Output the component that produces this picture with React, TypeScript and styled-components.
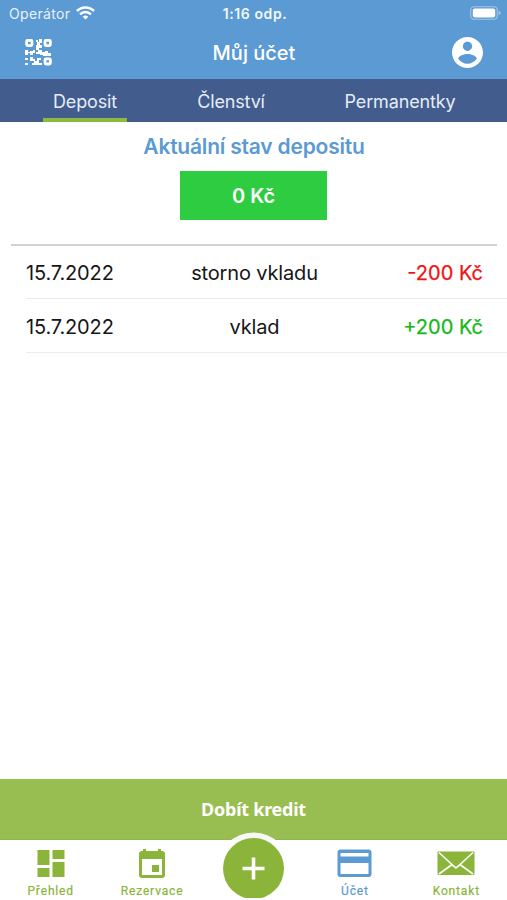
import React from "react";
import styled, { createGlobalStyle } from "styled-components";

const GlobalStyle = createGlobalStyle`
  * { box-sizing: border-box; }
  body { margin: 0; background: #fff; }
`;

const Screen = styled.div`
  width: 507px;
  height: 900px;
  display: flex;
  flex-direction: column;
  overflow: hidden;
  background: #fff;
  color: #161616;
  font-family: Inter, "Liberation Sans", sans-serif;
`;

const Header = styled.header`
  height: 79px;
  flex: none;
  background: #5b9ad2;
  color: #fff;
`;

const StatusBar = styled.div`
  display: grid;
  grid-template-columns: 1fr auto 1fr;
  align-items: center;
  height: 27px;
  padding: 0 6px 0 9px;
  font-size: 14px;
`;

const Carrier = styled.div`
  display: flex;
  align-items: center;
  gap: 6px;
  letter-spacing: 0.35px;
  color: #e9f2fa;
  svg { position: relative; top: -1px; }
`;

const Clock = styled.div`
  font-weight: 600;
  letter-spacing: 0.6px;
  color: #f1f7fc;
`;

const BatterySlot = styled.div`
  display: flex;
  justify-content: flex-end;
  padding-bottom: 2px;
`;

const TitleBar = styled.div`
  display: grid;
  grid-template-columns: 1fr auto 1fr;
  align-items: center;
  height: 50px;
  padding: 0 24px 0 25px;
  svg { display: block; }
  svg:last-child { justify-self: end; }
`;

const Title = styled.h1`
  margin: 0;
  padding-top: 1px;
  font-size: 20px;
  font-weight: 500;
`;

const Tabs = styled.nav`
  display: flex;
  flex: none;
  height: 43px;
  padding-left: 43px;
  background: #425c8d;
`;

const Tab = styled.div<{ $active?: boolean; $width: number; $gap?: number }>`
  width: ${(p) => p.$width}px;
  margin-left: ${(p) => p.$gap ?? 0}px;
  height: 43px;
  line-height: 45px;
  text-align: center;
  white-space: nowrap;
  font-size: 18px;
  letter-spacing: -0.15px;
  color: #e6edf8;
  border-bottom: 4px solid ${(p) => (p.$active ? "#8bba3e" : "transparent")};
`;

const Balance = styled.section`
  display: flex;
  flex-direction: column;
  align-items: center;
  flex: none;
  height: 124px;
  margin: 0 10px 0 11px;
  border-bottom: 2px solid #d3d3d3;
`;

const BalanceTitle = styled.h2`
  margin: 11px 0 10px;
  font-size: 21px;
  line-height: 28px;
  font-weight: 600;
  letter-spacing: -0.2px;
  color: #5b9ad2;
  white-space: nowrap;
`;

const Amount = styled.div`
  width: 147px;
  height: 49px;
  margin-right: 1px;
  line-height: 50px;
  text-align: center;
  font-size: 20px;
  font-weight: 600;
  background: #2ecc40;
  color: #fff;
`;

const Row = styled.div`
  display: grid;
  grid-template-columns: 1fr auto 1fr;
  align-items: center;
  flex: none;
  height: 54px;
  margin-left: 26px;
  padding: 2px 24px 0 0;
  border-bottom: 1px solid #ebebeb;
  font-size: 20px;
  letter-spacing: -0.15px;
  &:first-child { height: 53px; }
`;

const Value = styled.span<{ $negative?: boolean }>`
  text-align: right;
  letter-spacing: 0;
  -webkit-text-stroke: 0.25px currentColor;
  color: ${(p) => (p.$negative ? "#f01414" : "#16b81b")};
`;

const List = styled.main`
  flex: 1;
`;

const TopUp = styled.button`
  flex: none;
  height: 61px;
  padding: 0;
  border: 0;
  border-bottom: 1px solid #8fb54b;
  background: #98bd50;
  color: #fff;
  font: 700 18px/59px "Noto Sans", sans-serif;
  letter-spacing: -0.25px;
`;

const BottomNav = styled.nav`
  position: relative;
  display: grid;
  grid-template-columns: repeat(5, 1fr);
  flex: none;
  height: 60px;
  padding-bottom: 2px;
`;

const NavItem = styled.div<{ $active?: boolean }>`
  display: flex;
  flex-direction: column;
  align-items: center;
  padding-top: 7px;
  font-size: 12px;
  font-weight: 400;
  line-height: 16px;
  letter-spacing: 0.85px;
  font-family: Roboto, sans-serif;
  -webkit-text-stroke: 0.2px currentColor;
  color: ${(p) => (p.$active ? "#5b9ad2" : "#8ab53a")};
  svg { display: block; margin-bottom: 4px; }
`;

const AddSlot = styled.div`
  position: absolute;
  left: 216px;
  top: -8px;
  width: 75px;
  height: 66px;
  overflow: hidden;
`;

const QrIcon = () => (
  <svg width="27" height="27" viewBox="0 0 27 27" fill="#fff">
    <g fill="none" stroke="#fff" strokeWidth="2.8">
      <rect x="1.6" y="1.4" width="5.4" height="5.2" rx="1" />
      <rect x="20" y="1.4" width="5.4" height="5.2" rx="1" />
      <rect x="20" y="19.8" width="5.4" height="5.2" rx="1" />
    </g>
    <path d="M11 1h2v2h-2zM14 0h3v4h-2v2h2v3h-3v2h-3V6h1V3h2zM0 11h3v2h2v-1h3v-1h2v3H8v2H5v-2H3v2H0zM13 11h4v2h3v-1h3v2h3v3h-8v-1h-3v-1h-4v-2h2zM0 19h3v2H0zM5 18h3v2h2v2h2v-3h4v2h-2v3h3v2H7v-2h2v-2H5zM0 24h3v2H0z" />
  </svg>
);

const WifiIcon = () => (
  <svg width="19" height="14" viewBox="0 0 19 14" fill="none" stroke="#fff" strokeWidth="2.5">
    <path d="M1 5a12 12 0 0 1 17 0" />
    <path d="M4.1 8.3a7.5 7.5 0 0 1 10.8 0" />
    <path d="M9.5 13.6 6.7 10.8a4 4 0 0 1 5.6 0z" fill="#fff" stroke="none" />
  </svg>
);

const BatteryIcon = () => (
  <svg width="31" height="14" viewBox="0 0 31 14">
    <rect x=".7" y=".7" width="26.6" height="12.6" rx="3.5" fill="none" stroke="#a4c7e6" strokeWidth="1.1" />
    <rect x="2.8" y="2.5" width="22.4" height="9" rx="2" fill="#fff" />
    <path d="M28.7 4.8q2 .6 2 2.2t-2 2.2z" fill="#a4c7e6" />
  </svg>
);

const AccountIcon = () => (
  <svg width="31" height="31" viewBox="2 2 20 20" fill="#fff">
    <path d="M12 2C6.48 2 2 6.48 2 12s4.48 10 10 10 10-4.48 10-10S17.52 2 12 2zm0 3c1.66 0 3 1.34 3 3s-1.34 3-3 3-3-1.34-3-3 1.34-3 3-3zm0 14.2c-2.5 0-4.71-1.28-6-3.22.03-1.99 4-3.08 6-3.08 1.99 0 5.97 1.09 6 3.08-1.29 1.94-3.5 3.22-6 3.22z" />
  </svg>
);

const DashboardIcon = () => (
  <svg width="28" height="32" viewBox="0 0 28 32" fill="#8ab53a">
    <path d="M.5 3h12v15H.5zM15.500 3h12v9h-12zM.5 21h12v9H.5zM15.500 15h12v15h-12z" />
  </svg>
);

const CalendarIcon = () => (
  <svg width="26" height="32" viewBox="0 0 26 32" fill="#8ab53a">
    <path fillRule="evenodd" d="M4 2h3v2h12V2h3v2h1q3 0 3 3v21q0 3-3 3H3q-3 0-3-3V7q0-3 3-3h1zM3 12v16h20V12zM13 18h7v7h-7z" />
  </svg>
);

const CardIcon = () => (
  <svg width="35" height="32" viewBox="0 0 35 32" fill="#5b9ad2">
    <path fillRule="evenodd" d="M3.500 2.500h28q3 0 3 3V27q0 3-3 3h-28q-3 0-3-3V5.500q0-3 3-3zM3.500 6v3.500h28V6zM3.500 16v11h28V16z" />
  </svg>
);

const MailIcon = () => (
  <svg width="38" height="32" viewBox="0 0 38 32">
    <rect x=".5" y="4.500" width="37" height="23.500" rx="1" fill="#8ab53a" />
    <path d="M2 5.500 16.500 19l2.500 2 2.500-2L36 5.500M2 27 15 17.500l4 3.500 4-3.500L36 27" fill="none" stroke="#fff" strokeWidth="1.600" />
  </svg>
);

const AddIcon = () => (
  <svg width="75" height="75" viewBox="0 0 75 75">
    <circle cx="37.500" cy="37" r="36.500" fill="#f7f8f5" />
    <path d="M0 8h75v67H0z" fill="#fff" />
    <circle cx="37.500" cy="36.500" r="30.500" fill="#8ab53a" />
    <path d="M37.500 25.500v22M26.500 36.500h22" stroke="#fff" strokeWidth="3.600" />
  </svg>
);

const transactions = [
  { date: "15.7.2022", label: "storno vkladu", value: "-200 Kč" },
  { date: "15.7.2022", label: "vklad", value: "+200 Kč" },
];

export default function App() {
  return (
    <Screen>
      <GlobalStyle />
      <Header>
        <StatusBar>
          <Carrier>Operátor <WifiIcon /></Carrier>
          <Clock>1:16 odp.</Clock>
          <BatterySlot><BatteryIcon /></BatterySlot>
        </StatusBar>
        <TitleBar>
          <QrIcon />
          <Title>Můj účet</Title>
          <AccountIcon />
        </TitleBar>
      </Header>
      <Tabs>
        <Tab $active $width={84}>Deposit</Tab>
        <Tab $width={90} $gap={59}>Členství</Tab>
        <Tab $width={130} $gap={59}>Permanentky</Tab>
      </Tabs>
      <Balance>
        <BalanceTitle>Aktuální stav depositu</BalanceTitle>
        <Amount>0 Kč</Amount>
      </Balance>
      <List>
        {transactions.map((t) => (
          <Row key={t.label}>
            <span>{t.date}</span>
            <span>{t.label}</span>
            <Value $negative={t.value.startsWith("-")}>{t.value}</Value>
          </Row>
        ))}
      </List>
      <TopUp>Dobít kredit</TopUp>
      <BottomNav>
        <NavItem><DashboardIcon />Přehled</NavItem>
        <NavItem><CalendarIcon />Rezervace</NavItem>
        <AddSlot><AddIcon /></AddSlot>
        <span />
        <NavItem $active><CardIcon />Účet</NavItem>
        <NavItem><MailIcon />Kontakt</NavItem>
      </BottomNav>
    </Screen>
  );
}
